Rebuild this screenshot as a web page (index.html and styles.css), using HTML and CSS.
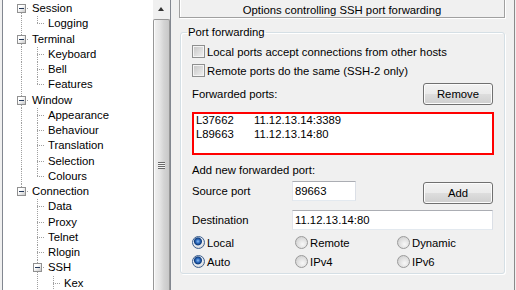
FILE: index.html
```html
<!DOCTYPE html>
<html lang="en">
<head>
    <meta charset="UTF-8">
    <meta name="viewport" content="width=device-width, initial-scale=1.0">
    <title>PuTTY Configuration - Tunnels</title>
    <link rel="stylesheet" href="styles.css">
</head>
<body>
    <div class="dialog">
        <!-- category tree -->
        <div class="tree-pane">
            <ul class="tree">
                <li class="node"><span class="g x down"><span class="box"></span></span><span class="label">Session</span></li>
                <li class="node"><span class="g v"></span><span class="g l"></span><span class="label">Logging</span></li>
                <li class="node"><span class="g x up down"><span class="box"></span></span><span class="label">Terminal</span></li>
                <li class="node"><span class="g v"></span><span class="g t"></span><span class="label">Keyboard</span></li>
                <li class="node"><span class="g v"></span><span class="g t"></span><span class="label">Bell</span></li>
                <li class="node"><span class="g v"></span><span class="g l"></span><span class="label">Features</span></li>
                <li class="node"><span class="g x up down"><span class="box"></span></span><span class="label">Window</span></li>
                <li class="node"><span class="g v"></span><span class="g t"></span><span class="label">Appearance</span></li>
                <li class="node"><span class="g v"></span><span class="g t"></span><span class="label">Behaviour</span></li>
                <li class="node"><span class="g v"></span><span class="g t"></span><span class="label">Translation</span></li>
                <li class="node"><span class="g v"></span><span class="g t"></span><span class="label">Selection</span></li>
                <li class="node"><span class="g v"></span><span class="g l"></span><span class="label">Colours</span></li>
                <li class="node"><span class="g x up"><span class="box"></span></span><span class="label">Connection</span></li>
                <li class="node"><span class="g"></span><span class="g t"></span><span class="label">Data</span></li>
                <li class="node"><span class="g"></span><span class="g t"></span><span class="label">Proxy</span></li>
                <li class="node"><span class="g"></span><span class="g t"></span><span class="label">Telnet</span></li>
                <li class="node"><span class="g"></span><span class="g t"></span><span class="label">Rlogin</span></li>
                <li class="node"><span class="g"></span><span class="g x up down"><span class="box"></span></span><span class="label">SSH</span></li>
                <li class="node"><span class="g"></span><span class="g v"></span><span class="g t"></span><span class="label">Kex</span></li>
            </ul>
            <div class="scrollbar">
                <div class="scroll-up"><span class="arrow"></span></div>
                <div class="thumb"><span class="grip"></span></div>
            </div>
        </div>

        <!-- options panel -->
        <div class="panel">
            <div class="panel-title">Options controlling SSH port forwarding</div>
            <fieldset class="group">
                <legend>Port forwarding</legend>
                <label class="check-row"><span class="check"></span>Local ports accept connections from other hosts</label>
                <label class="check-row"><span class="check"></span>Remote ports do the same (SSH-2 only)</label>
                <div class="list-head">
                    <span>Forwarded ports:</span>
                    <button class="btn">Remove</button>
                </div>
                <div class="port-list">
                    <div class="port"><span class="port-src">L37662</span><span>11.12.13.14:3389</span></div>
                    <div class="port"><span class="port-src">L89663</span><span>11.12.13.14:80</span></div>
                </div>
                <div class="add-title">Add new forwarded port:</div>
                <div class="field-row first">
                    <span class="field-label">Source port</span>
                    <input class="edit short" type="text" value="89663">
                    <button class="btn add">Add</button>
                </div>
                <div class="field-row">
                    <span class="field-label">Destination</span>
                    <input class="edit wide" type="text" value="11.12.13.14:80">
                </div>
                <div class="radios">
                    <label><span class="radio on"></span>Local</label>
                    <label><span class="radio"></span>Remote</label>
                    <label><span class="radio"></span>Dynamic</label>
                    <label><span class="radio on"></span>Auto</label>
                    <label><span class="radio"></span>IPv4</label>
                    <label><span class="radio"></span>IPv6</label>
                </div>
            </fieldset>
        </div>
    </div>
</body>
</html>
```

FILE: styles.css
```css
html, body {
    height: 290px;
    overflow: hidden;
}
body {
    margin: 0;
    padding-left: 2px;
    background: #f0f0f0;
    font-family: 'Liberation Sans', Arial, sans-serif;
    font-size: 11.3px;
    color: #000;
    --dv: repeating-linear-gradient(#a0a0a0 0 1px, transparent 1px 2px);
    --dh: repeating-linear-gradient(90deg, #a0a0a0 0 1px, transparent 1px 2px);
}
.dialog {
    display: flex;
    height: 100%;
}

/* tree */
.tree-pane {
    display: flex;
    width: 167px;
    flex: none;
    overflow: hidden;
    border-left: 1px solid #828790;
    border-right: 1px solid #828790;
    background: #fff;
}
.tree {
    list-style: none;
    margin: 0;
    padding: 1px 0 0 10px;
    flex: 1;
    overflow: hidden;
}
.node {
    display: flex;
    height: 15.25px;
}
.label {
    padding-left: 3px;
    line-height: 15.25px;
    white-space: nowrap;
}
.g {
    width: 16px;
    flex: none;
    background-repeat: no-repeat;
}
.g.v {
    background-image: var(--dv);
    background-size: 1px 100%;
    background-position: 8px 0;
}
.g.t {
    background-image: var(--dv), var(--dh);
    background-size: 1px 100%, 8px 1px;
    background-position: 8px 0, 8px 50%;
}
.g.l {
    background-image: var(--dv), var(--dh);
    background-size: 1px 50%, 8px 1px;
    background-position: 8px 0, 8px 50%;
}
.g.x {
    display: flex;
    align-items: center;
    background-image: var(--dh);
    background-size: 8px 1px;
    background-position: 8px 50%;
}
.g.x.down {
    background-image: var(--dh), var(--dv);
    background-size: 8px 1px, 1px 50%;
    background-position: 8px 50%, 8px 100%;
}
.g.x.up {
    background-image: var(--dh), var(--dv);
    background-size: 8px 1px, 1px 50%;
    background-position: 8px 50%, 8px 0;
}
.g.x.up.down {
    background-size: 8px 1px, 1px 100%;
}
.box {
    display: flex;
    align-items: center;
    justify-content: center;
    box-sizing: border-box;
    width: 9px;
    height: 9px;
    margin-left: 4px;
    border: 1px solid #919191;
    background: linear-gradient(135deg, #fff 35%, #c9c9c9);
}
.box::before {
    content: '';
    width: 5px;
    height: 1px;
    background: #24395a;
}

/* scrollbar */
.scrollbar {
    display: flex;
    flex-direction: column;
    width: 17px;
    flex: none;
    background: #ebebeb;
}
.scroll-up {
    display: flex;
    align-items: center;
    justify-content: center;
    height: 19px;
    flex: none;
    background: #f0f0f0;
}
.arrow {
    width: 0;
    height: 0;
    margin: 0 2px 1px 0;
    border-left: 3.5px solid transparent;
    border-right: 3.5px solid transparent;
    border-bottom: 4px solid #333;
}
.thumb {
    display: flex;
    justify-content: center;
    flex: 1;
    border: 1px solid #979797;
    border-bottom: none;
    border-radius: 2px 2px 0 0;
    background: linear-gradient(90deg, #f1f1f1, #e4e4e4 40%, #d4d4d4 65%, #c8c8c8);
    box-shadow: inset 1px 0 0 #fbfbfb;
}
.grip {
    width: 7px;
    height: 7px;
    margin-top: 142px;
    background: repeating-linear-gradient(#6a6a6a 0 1px, #f4f4f4 1px 2px);
}

/* panel */
.panel {
    flex: 1;
    padding: 0 9px 0 8px;
    margin-right: 1px;
    border-right: 1px solid #8a8a8a;
}
.panel-title {
    margin-top: -4px;
    padding-top: 6px;
    line-height: 14px;
    text-align: center;
    border: 1px solid #a0a0a0;
    box-shadow: 1px 1px 0 #fff, inset 1px 1px 0 #fff;
}
.group {
    margin: 7px 0 0 1px;
    padding: 3px 10px 2px 11px;
    min-width: 0;
    border: 1px solid #d5dfe5;
    border-radius: 3px;
    box-shadow: inset 1px 1px 0 #fff, 1px 1px 0 #fff;
}
.group legend {
    margin-left: -5px;
    padding: 0 1px;
    line-height: 14px;
}
.check-row {
    display: flex;
    align-items: center;
    gap: 2px;
    height: 19px;
}
.check {
    box-sizing: border-box;
    width: 13px;
    height: 13px;
    border: 1px solid #8e8f8f;
    background: linear-gradient(135deg, #c4c4c4, #f2f2f2);
    box-shadow: inset 0 0 0 1px #f4f4f4;
}
.list-head {
    display: flex;
    align-items: center;
    justify-content: space-between;
    margin-top: 3px;
    height: 22px;
}
.btn {
    box-sizing: border-box;
    width: 70px;
    height: 22px;
    margin-right: 1px;
    padding: 0;
    font: inherit;
    color: #000;
    border: 1px solid #707070;
    border-radius: 3px;
    background: linear-gradient(#f2f2f2, #ebebeb 48%, #dddddd 52%, #cfcfcf);
    box-shadow: inset 0 0 0 1px #fcfcfc;
}
.port-list {
    box-sizing: border-box;
    height: 43px;
    margin-top: 7px;
    padding: 0 0 0 2px;
    border: 2px solid #f00;
    background: #fff;
}
.port {
    line-height: 13.5px;
    white-space: nowrap;
}
.port-src {
    display: inline-block;
    width: 58px;
}
.add-title {
    margin-top: 8px;
    line-height: 14px;
}
.field-row {
    display: flex;
    align-items: flex-start;
    margin-top: 6px;
}
.field-row.first {
    height: 23px;
    margin-top: 4px;
}
.field-label {
    width: 100px;
    flex: none;
    line-height: 20px;
}
.edit {
    box-sizing: border-box;
    height: 20px;
    padding: 0 0 0 2px;
    font: inherit;
    color: #000;
    background: #fff;
    border: 1px solid;
    border-color: #abadb3 #dbdfe6 #e3e9ef #e2e3ea;
    outline: none;
}
.edit.short {
    width: 64px;
}
.edit.wide {
    flex: 1;
    min-width: 0;
    margin-right: 1px;
}
.btn.add {
    margin-left: auto;
    margin-top: 1px;
}
.radios {
    display: grid;
    grid-template-columns: 103px 102px 1fr;
    grid-auto-rows: 19px;
    margin-top: 3px;
}
.radios label {
    display: flex;
    align-items: center;
    gap: 2px;
}
.radio {
    box-sizing: border-box;
    width: 13px;
    height: 13px;
    border: 1px solid #9a9a9a;
    border-radius: 50%;
    background: radial-gradient(circle at 60% 65%, #f8f8f8, #d4d4d4 75%);
}
.radio.on {
    border-color: #3c5f8f;
    background: radial-gradient(circle at 45% 40%, #8fc0f2 0, #2d6bc0 2px, #0f3b7a 3.5px, #e9eef4 4.5px, #dcdcdc 6px);
}
```
